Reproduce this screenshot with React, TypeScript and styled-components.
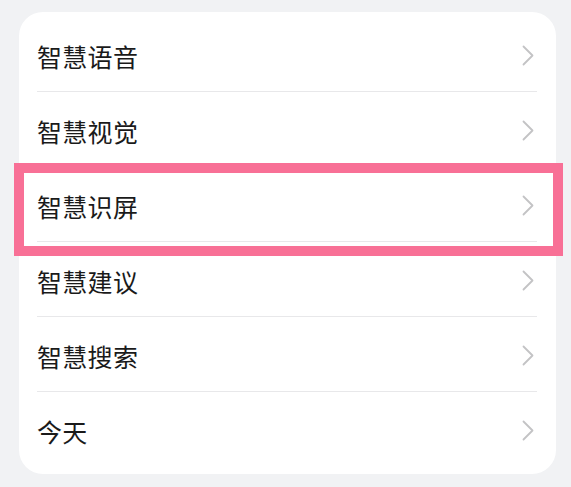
import styled, { createGlobalStyle } from "styled-components";

const GlobalStyle = createGlobalStyle`
    html, body {
        margin: 0;
        padding: 0;
        background: #f1f2f4;
    }
    body {
        font-family: "Noto Sans CJK SC", "Noto Sans", sans-serif;
    }
`

const items = ['智慧语音', '智慧视觉', '智慧识屏', '智慧建议', '智慧搜索', '今天']

const Chevron = () => (
    <svg width="12" height="21" viewBox="0 0 12 21" fill="none">
        <polyline points="1.5,1.5 10.5,10.5 1.5,19.5" stroke="#c3c3c5" strokeWidth="1.8" strokeLinecap="round" strokeLinejoin="round"/>
    </svg>
)

const App = () => {
    return(
        <>
            <GlobalStyle/>
            <Page>
                <Card>
                    {items.map((label, i) => (
                        <div key = {label}>
                            {i > 0 && <Divider/>}
                            <Row>
                                <Label>{label}</Label>
                                <Chevron/>
                                {label === '智慧识屏' && <Highlight/>}
                            </Row>
                        </div>
                    ))}
                </Card>
            </Page>
        </>
    )
}

export default App;

const Page = styled.div`
    width: 571px;
    height: 487px;
    padding: 12px 15px 0 19px;
    box-sizing: border-box;
`

const Card = styled.div`
    width: 537px;
    background: #ffffff;
    border-radius: 24px;
    padding: 5px 0 8px;
    box-sizing: border-box;
`

const Row = styled.div`
    position: relative;
    height: 74px;
    display: flex;
    align-items: center;
    justify-content: space-between;
    padding: 3px 22px 0 18px;
    box-sizing: border-box;
`

const Label = styled.div`
    font-size: 25px;
    font-weight: 400;
    color: #1a1a1a;
    letter-spacing: 0.3px;
`

const Divider = styled.div`
    height: 1px;
    margin: 0 19px 0 18px;
    background: #e8e8ea;
`

const Highlight = styled.div`
    position: absolute;
    top: -4px;
    bottom: -15px;
    left: -5px;
    right: -7px;
    border: 10px solid #f87096;
    pointer-events: none;
`
